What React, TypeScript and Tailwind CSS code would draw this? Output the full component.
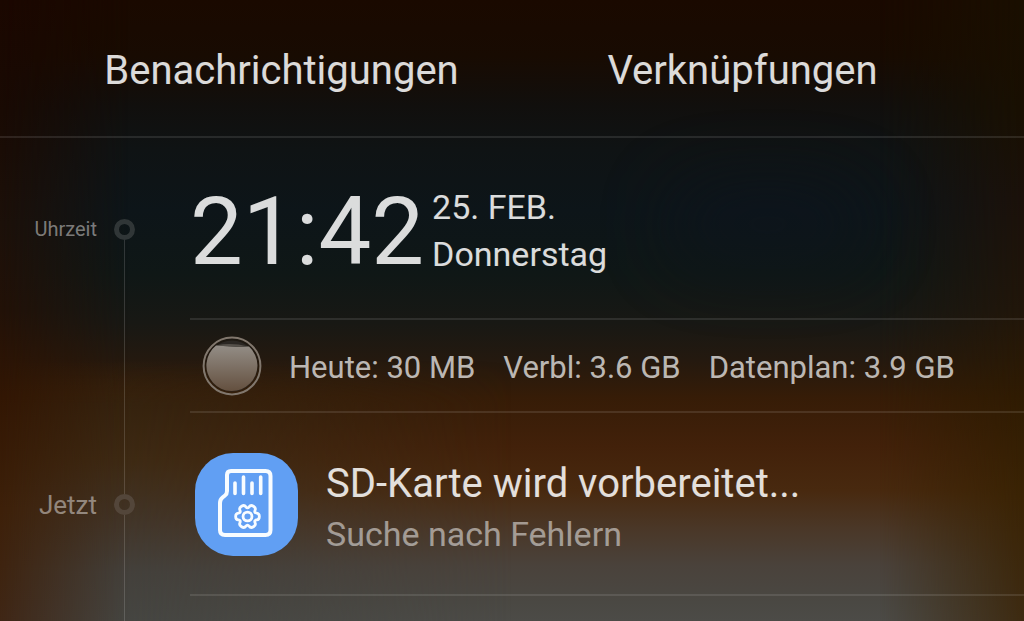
import type { ReactNode } from "react";
import clsx from "clsx";

const usage = ["Heute: 30 MB", "Verbl: 3.6 GB", "Datenplan: 3.9 GB"];

function Backdrop() {
    return (
        <div aria-hidden="true" className="absolute inset-0 -z-10 overflow-hidden">
            <div className="absolute inset-0 bg-[linear-gradient(180deg,#1a0900_0%,#180b02_9%,#110f0d_17%,#0f1314_24%,#0d1519_34%,#0f1716_44%,#181814_52%,#24190f_58%,#361c07_64%,#42210a_72%,#48290f_79%,#4a3727_85%,#4a423b_91%,#4a4843_97%,#4c4b47_100%)]" />
            <div className="absolute inset-y-0 left-0 w-1/2 bg-[linear-gradient(180deg,transparent_58%,#35230f_65%,#3d2a14_74%,#413529_84%,#43403b_92%,#454541_100%)] mask-r-from-20%" />
            <div className="absolute inset-y-0 left-0 w-32 bg-[linear-gradient(180deg,#1b0700_0%,#190a03_18%,#1c1009_36%,#221107_50%,#321603_64%,#3d2009_82%,#3f2615_100%)] mask-r-from-0%" />
            <div className="absolute inset-y-0 right-0 w-36 bg-[linear-gradient(180deg,#1a0f00_0%,#191002_18%,#1b110a_32%,#21160a_50%,#2f1b02_64%,#3a2304_80%,#3d2a11_100%)] mask-l-from-0%" />
            <div className="absolute right-40 top-48 h-16 w-48 rounded-full bg-[#0d1424] opacity-40 blur-2xl" />
        </div>
    );
}

interface RowProps {
    label?: string;
    labelClass?: string;
    ring?: string;
    first?: boolean;
    className?: string;
    children?: ReactNode;
}

function Row({ label, labelClass, ring, first, className, children }: RowProps) {
    return (
        <li className={clsx("flex", className)}>
            <div className={clsx("flex w-[97px] shrink-0 items-center justify-end", labelClass)}>{label}</div>
            <div className="ml-[17px] flex w-[21px] shrink-0 flex-col items-center">
                <span className={clsx("w-px flex-1", !first && "bg-white/15")} />
                {ring && <span className={clsx("size-[21px] rounded-full border-5", ring)} />}
                <span className="w-px flex-1 bg-white/15" />
            </div>
            <div className={clsx("ml-[55px] flex min-w-0 flex-1 items-center", children && "border-b-2 border-white/10")}>
                {children}
            </div>
        </li>
    );
}

function DataGauge() {
    return (
        <svg viewBox="0 0 60 60" className="size-[60px] shrink-0" aria-hidden="true">
            <defs>
                <linearGradient id="level" x1="0" y1="0" x2="0" y2="1">
                    <stop offset="0" stopColor="#938d86" />
                    <stop offset="1" stopColor="#64503f" />
                </linearGradient>
            </defs>
            <circle cx="30" cy="30" r="25.5" fill="#2b2723" />
            <path d="M14 9.6C22 8.6 31 11.4 47 10.6A25.5 25.5 0 1 1 14 9.6Z" fill="url(#level)" />
            <path d="M15 9.2Q30 6.5 46 10.4Q30 11.5 15 9.2Z" fill="#55504a" />
            <circle cx="30" cy="30" r="28.4" fill="none" stroke="#81776d" strokeWidth="2" />
        </svg>
    );
}

function SdCardIcon() {
    return (
        <div className="size-[103px] shrink-0 rounded-[38px] bg-[#619ff3]">
            <svg viewBox="0 0 103 103" fill="none" stroke="#f8fcff" strokeLinecap="round" strokeLinejoin="round" aria-hidden="true">
                <path strokeWidth="4" d="M36 18H70.5Q75.5 18 75.5 23V77Q75.5 82 70.5 82H30Q25 82 25 77V50Q25 46.5 27.5 44.5L30 42.5Q32 41 32 38V22Q32 18 36 18Z" />
                <path strokeWidth="3.6" d="M40 30V40.5M48.5 24V40.5M57 30V40.5M65.7 24V40.5" />
                <g transform="translate(52.5 63.5) scale(.93)" strokeWidth="3">
                    <path d="M12.75 0Q12.75 3.42 9.84 3.71Q6.93 4 8.13 6.67Q9.33 9.33 6.38 11.04Q3.42 12.75 1.71 10.38Q0 8 -1.71 10.38Q-3.42 12.75 -6.38 11.04Q-9.33 9.33 -8.13 6.67Q-6.93 4 -9.84 3.71Q-12.75 3.42 -12.75 0Q-12.75 -3.42 -9.84 -3.71Q-6.93 -4 -8.13 -6.67Q-9.33 -9.33 -6.38 -11.04Q-3.42 -12.75 -1.71 -10.38Q0 -8 1.71 -10.38Q3.42 -12.75 6.38 -11.04Q9.33 -9.33 8.13 -6.67Q6.93 -4 9.84 -3.71Q12.75 -3.42 12.75 0Z" />
                    <circle r="4.8" />
                </g>
            </svg>
        </div>
    );
}

export default function App() {
    return (
        <main className="relative isolate flex min-h-screen flex-col overflow-hidden bg-[#100f0e] font-['Roboto',sans-serif] text-white">
            <Backdrop />
            <nav className="flex border-b-2 border-white/10 px-[51px] pb-[35px] pt-[41px] text-[40px] leading-[60px] text-white/85">
                <button type="button" className="flex-1">Benachrichtigungen</button>
                <button type="button" className="flex-1">Verknüpfungen</button>
            </nav>
            <ul className="flex flex-1 flex-col">
                <Row first label="Uhrzeit" labelClass="text-xl text-white/45" ring="border-[#303637]" className="h-[182px]">
                    <time className="pt-2 text-[94px] leading-none text-white/85">21:42</time>
                    <div className="ml-2 pt-1.5 text-[34px] leading-[47px] text-white/85">
                        <p>25. FEB.</p>
                        <p>Donnerstag</p>
                    </div>
                </Row>
                <Row className="h-[93px]">
                    <div className="flex items-center pl-3">
                        <DataGauge />
                        <div className="flex gap-7 whitespace-nowrap pl-[27px] pt-1.5 text-[31px] text-white/70">
                            {usage.map((item) => (
                                <span key={item}>{item}</span>
                            ))}
                        </div>
                    </div>
                </Row>
                <Row label="Jetzt" labelClass="pt-0.5 text-[26px] text-white/45" ring="border-[#53463a]" className="h-[183px]">
                    <div className="flex items-center gap-7 pl-[5px] pt-0.5">
                        <SdCardIcon />
                        <div className="pt-2">
                            <h2 className="text-[40px] leading-[50px] text-white/85">SD-Karte wird vorbereitet...</h2>
                            <p className="text-[34px] leading-[50px] text-white/50">Suche nach Fehlern</p>
                        </div>
                    </div>
                </Row>
                <Row className="flex-1" />
            </ul>
        </main>
    );
}
